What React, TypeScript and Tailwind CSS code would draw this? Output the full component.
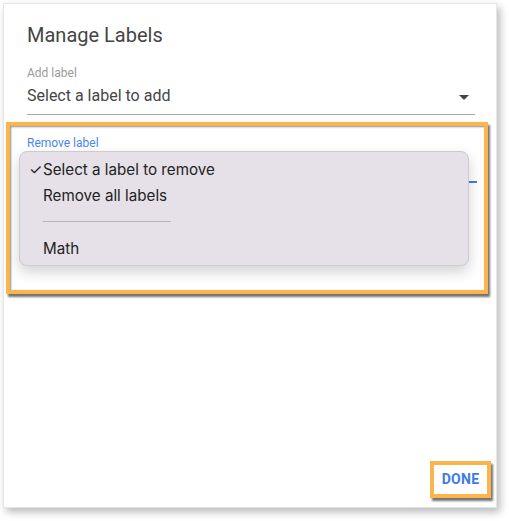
import React from "react";

export default function App() {
  return (
    <div className="w-[509px] h-[521px] bg-white" style={{ fontFamily: "Roboto, 'Liberation Sans', sans-serif" }}>
      <div className="absolute left-[3px] top-[3px] w-[494px] h-[505px] bg-white border border-[#e6e6e6] shadow-[3px_4px_8px_rgba(0,0,0,0.28)] flex flex-col">
        <div className="ml-[23px] mt-[19px] text-[20px] leading-[24px] text-[#454545]">Manage Labels</div>
        <div className="ml-[23px] mr-[21px] mt-[18px] flex flex-col">
          <div className="text-[12px] leading-[16px] text-[#9a9a9a]">Add label</div>
          <div className="mt-[5px] pb-[8px] border-b border-[#a8a8a8] flex items-center justify-between">
            <span className="text-[16px] leading-[20px] text-[#454545]">Select a label to add</span>
            <svg width="10" height="6" viewBox="0 0 10 6" className="mr-[6px] mt-[4px]"><path d="M0 0h10L5 5z" fill="#444" /></svg>
          </div>
        </div>
        <div className="relative ml-[2px] mt-[7px] w-[482px] h-[172px] border-[4px] border-[#fbb54c] shadow-[2px_3px_2px_rgba(0,0,0,0.55),inset_1px_1px_2px_rgba(0,0,0,0.45)]">
          <div className="ml-[17px] mr-[7px] mt-[9px] flex flex-col">
            <div className="text-[12px] leading-[16px] text-[#4a86f0]">Remove label</div>
            <div className="mt-[30px] h-[2px] bg-[#3f7de8]" />
          </div>
          <div
            className="absolute left-[9px] top-[25px] w-[450px] h-[115px] rounded-[8px] bg-[#e6e1e8] border border-[#cfcad2] shadow-[0_6px_14px_rgba(0,0,0,0.18)] flex flex-col pt-[5px] text-[#232323]"
            style={{ fontFamily: "Inter, 'Noto Sans', sans-serif" }}
          >
            <div className="flex items-center h-[26px] text-[15.2px]">
              <span className="w-[23px] pl-[9px] text-[15px]">✓</span>
              <span>Select a label to remove</span>
            </div>
            <div className="flex items-center h-[26px] text-[15.2px] pl-[23px]">Remove all labels</div>
            <div className="ml-[23px] mt-[12px] mb-[14px] w-[128px] h-[1px] bg-[#b7b2ba]" />
            <div className="flex items-center h-[26px] text-[15.2px] pl-[23px]">Math</div>
          </div>
        </div>
        <div className="flex-1" />
        <div className="self-end mr-[5px] mb-[9px] w-[61px] h-[37px] border-[4px] border-[#fbb54c] shadow-[2px_3px_2px_rgba(0,0,0,0.55)] flex items-center justify-center">
          <span className="text-[14px] font-bold tracking-[0.3px] text-[#3d7be6]">DONE</span>
        </div>
      </div>
    </div>
  );
}
